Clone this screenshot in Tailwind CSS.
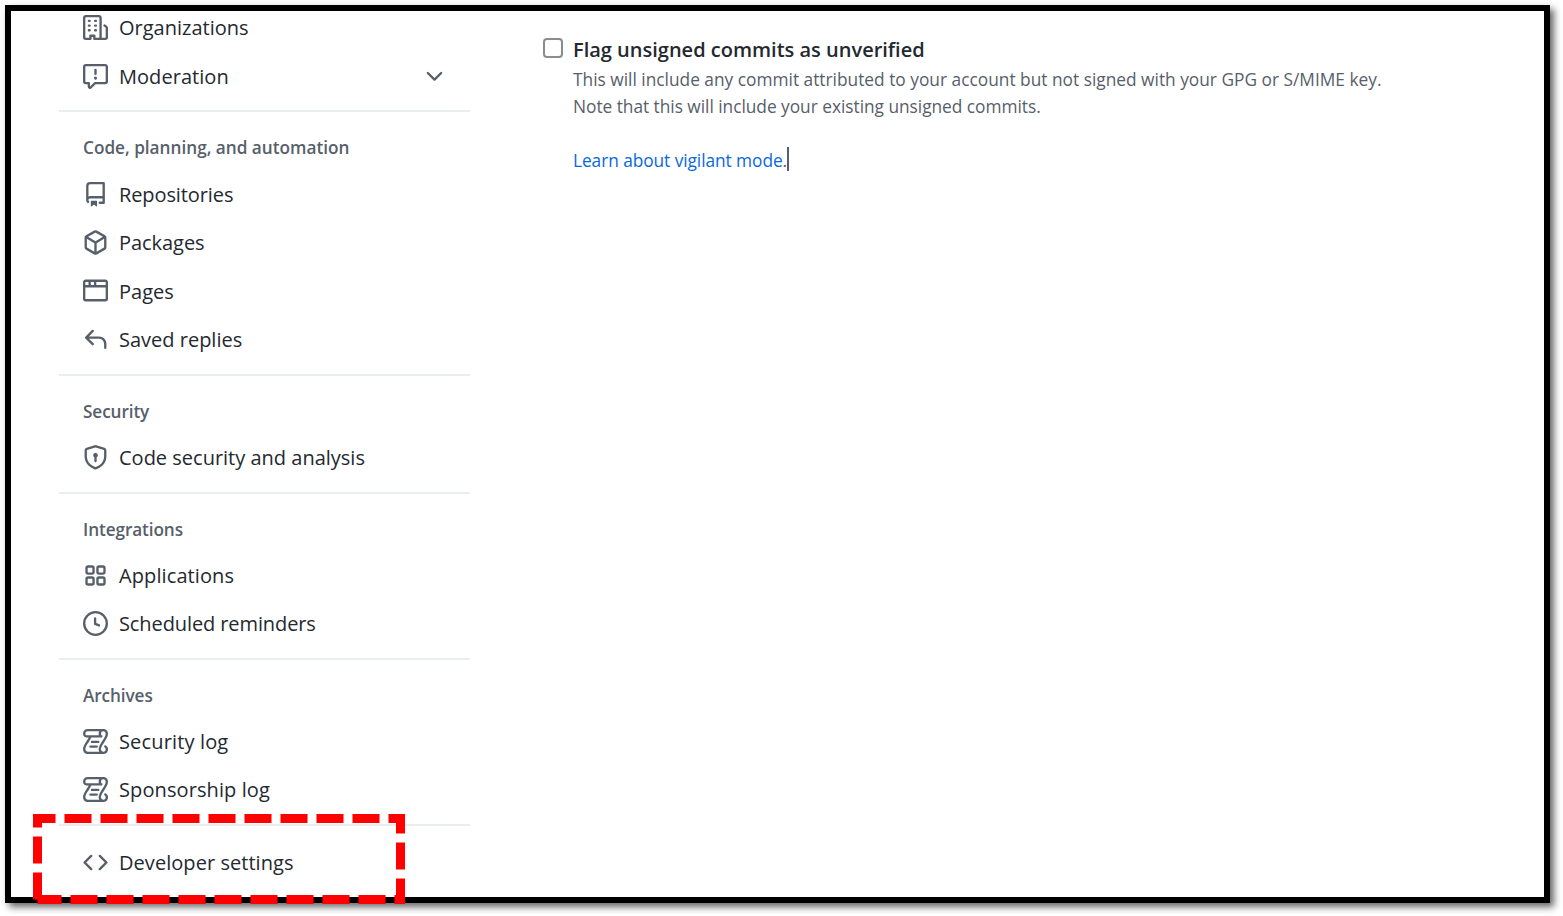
<!DOCTYPE html>
<html lang="en">

<head>
  <meta charset="UTF-8">
  <title>Account settings</title>
  <script src="https://cdn.jsdelivr.net/npm/@tailwindcss/browser@4"></script>
</head>

<body class="bg-white w-[1563px] h-[916px] overflow-hidden font-['Open_Sans','Noto_Sans',sans-serif] text-[#24292f]">
  <!-- icons -->
  <svg class="hidden">
    <symbol id="organization" viewBox="0 0 16 16"><path d="M1.75 16A1.75 1.75 0 0 1 0 14.25V1.75C0 .784.784 0 1.75 0h8.5C11.216 0 12 .784 12 1.75v12.5c0 .085-.006.168-.018.25h2.268a.25.25 0 0 0 .25-.25V8.285a.25.25 0 0 0-.111-.208l-1.055-.703a.749.749 0 1 1 .832-1.248l1.055.703c.487.325.779.871.779 1.456v5.965A1.75 1.75 0 0 1 14.25 16h-3.5a.766.766 0 0 1-.197-.026c-.099.017-.2.026-.303.026h-3a.75.75 0 0 1-.75-.75V14h-1v1.25a.75.75 0 0 1-.75.75Zm-.25-1.75c0 .138.112.25.25.25H4v-1.25a.75.75 0 0 1 .75-.75h2.5a.75.75 0 0 1 .75.75v1.25h2.25a.25.25 0 0 0 .25-.25V1.75a.25.25 0 0 0-.25-.25h-8.5a.25.25 0 0 0-.25.25ZM3.75 6h.5a.75.75 0 0 1 0 1.5h-.5a.75.75 0 0 1 0-1.5ZM3 3.75A.75.75 0 0 1 3.75 3h.5a.75.75 0 0 1 0 1.5h-.5A.75.75 0 0 1 3 3.75Zm4 3A.75.75 0 0 1 7.75 6h.5a.75.75 0 0 1 0 1.5h-.5A.75.75 0 0 1 7 6.75ZM7.75 3h.5a.75.75 0 0 1 0 1.5h-.5a.75.75 0 0 1 0-1.5ZM3 9.75A.75.75 0 0 1 3.75 9h.5a.75.75 0 0 1 0 1.5h-.5A.75.75 0 0 1 3 9.75ZM7.75 9h.5a.75.75 0 0 1 0 1.5h-.5a.75.75 0 0 1 0-1.5Z"/></symbol>
    <symbol id="report" viewBox="0 0 16 16"><path d="M0 1.75C0 .784.784 0 1.75 0h12.5C15.216 0 16 .784 16 1.75v9.5A1.75 1.75 0 0 1 14.25 13H8.06l-2.573 2.573A1.458 1.458 0 0 1 3 14.543V13H1.75A1.75 1.75 0 0 1 0 11.25Zm1.75-.25a.25.25 0 0 0-.25.25v9.5c0 .138.112.25.25.25h2a.75.75 0 0 1 .75.75v2.19l2.72-2.72a.749.749 0 0 1 .53-.22h6.5a.25.25 0 0 0 .25-.25v-9.5a.25.25 0 0 0-.25-.25Zm7 2.25v2.5a.75.75 0 0 1-1.5 0v-2.5a.75.75 0 0 1 1.5 0ZM9 9a1 1 0 1 1-2 0 1 1 0 0 1 2 0Z"/></symbol>
    <symbol id="chevron-down" viewBox="0 0 16 16"><path d="M12.78 5.22a.749.749 0 0 1 0 1.06l-4.25 4.25a.749.749 0 0 1-1.06 0L3.22 6.28a.749.749 0 1 1 1.06-1.06L8 8.939l3.72-3.719a.749.749 0 0 1 1.06 0Z"/></symbol>
    <symbol id="repo" viewBox="0 0 16 16"><path d="M2 2.5A2.5 2.5 0 0 1 4.5 0h8.75a.75.75 0 0 1 .75.75v12.5a.75.75 0 0 1-.75.75h-2.5a.75.75 0 0 1 0-1.5h1.75v-2h-8a1 1 0 0 0-.714 1.7.75.75 0 1 1-1.072 1.05A2.495 2.495 0 0 1 2 11.5Zm10.5-1h-8a1 1 0 0 0-1 1v6.708A2.486 2.486 0 0 1 4.5 9h8ZM5 12.25a.25.25 0 0 1 .25-.25h3.5a.25.25 0 0 1 .25.25v3.25a.25.25 0 0 1-.4.2l-1.45-1.087a.249.249 0 0 0-.3 0L5.4 15.7a.25.25 0 0 1-.4-.2Z"/></symbol>
    <symbol id="package" viewBox="0 0 16 16"><path d="m8.878.392 5.25 3.045c.54.314.872.89.872 1.514v6.098a1.75 1.75 0 0 1-.872 1.514l-5.25 3.045a1.75 1.75 0 0 1-1.756 0l-5.25-3.045A1.75 1.75 0 0 1 1 11.049V4.951c0-.624.332-1.201.872-1.514L7.122.392a1.75 1.75 0 0 1 1.756 0ZM7.875 1.69l-4.63 2.685L8 7.133l4.755-2.758-4.63-2.685a.248.248 0 0 0-.25 0ZM2.5 5.677v5.372c0 .09.047.171.125.216l4.625 2.683V8.432Zm6.25 8.271 4.625-2.683a.25.25 0 0 0 .125-.216V5.677L8.75 8.432Z"/></symbol>
    <symbol id="browser" viewBox="0 0 16 16"><path d="M0 2.75C0 1.784.784 1 1.75 1h12.5c.966 0 1.75.784 1.75 1.75v10.5A1.75 1.75 0 0 1 14.25 15H1.75A1.75 1.75 0 0 1 0 13.25ZM14.5 6h-13v7.25c0 .138.112.25.25.25h12.5a.25.25 0 0 0 .25-.25Zm-6-3.5v2h6V2.75a.25.25 0 0 0-.25-.25ZM5 2.5v2h2v-2Zm-3.25 0a.25.25 0 0 0-.25.25V4.5h2v-2Z"/></symbol>
    <symbol id="reply" viewBox="0 0 16 16"><path d="M6.78 1.97a.75.75 0 0 1 0 1.06L3.81 6h6.44A4.75 4.75 0 0 1 15 10.75v2.5a.75.75 0 0 1-1.5 0v-2.5a3.25 3.25 0 0 0-3.25-3.25H3.81l2.97 2.97a.749.749 0 0 1-.326 1.275.749.749 0 0 1-.734-.215L1.47 7.28a.75.75 0 0 1 0-1.06l4.25-4.25a.75.75 0 0 1 1.06 0Z"/></symbol>
    <symbol id="shield-lock" viewBox="0 0 16 16"><path d="m8.533.133 5.25 1.68A1.75 1.75 0 0 1 15 3.48V7c0 1.566-.32 3.182-1.303 4.682-.983 1.498-2.585 2.813-5.032 3.855a1.697 1.697 0 0 1-1.33 0c-2.447-1.042-4.049-2.357-5.032-3.855C1.32 10.182 1 8.566 1 7V3.48a1.75 1.75 0 0 1 1.217-1.667l5.25-1.68a1.748 1.748 0 0 1 1.066 0Zm-.61 1.429.001.001-5.25 1.68a.251.251 0 0 0-.174.237V7c0 1.36.275 2.666 1.057 3.859.784 1.194 2.121 2.342 4.366 3.298a.196.196 0 0 0 .154 0c2.245-.957 3.582-2.103 4.366-3.297C13.225 9.666 13.5 8.358 13.5 7V3.48a.25.25 0 0 0-.174-.238l-5.25-1.68a.25.25 0 0 0-.153 0ZM9.5 6.5c0 .536-.286 1.032-.75 1.3v2.45a.75.75 0 0 1-1.5 0V7.8A1.5 1.5 0 1 1 9.5 6.5Z"/></symbol>
    <symbol id="apps" viewBox="0 0 16 16"><g fill="none" stroke="currentColor" stroke-width="1.5"><rect x="2.25" y="2.25" width="4.5" height="4.5" rx="1"/><rect x="9.25" y="2.25" width="4.5" height="4.5" rx="1"/><rect x="2.25" y="9.25" width="4.5" height="4.5" rx="1"/><rect x="9.25" y="9.25" width="4.5" height="4.5" rx="1"/></g></symbol>
    <symbol id="clock" viewBox="0 0 16 16"><path d="M8 0a8 8 0 1 1 0 16A8 8 0 0 1 8 0ZM1.5 8a6.5 6.5 0 1 0 13 0 6.5 6.5 0 0 0-13 0Zm7-3.25v2.992l2.028.812a.75.75 0 0 1-.557 1.392l-2.5-1A.751.751 0 0 1 7 8.25v-3.5a.75.75 0 0 1 1.5 0Z"/></symbol>
    <symbol id="log" viewBox="0 0 16 16"><path d="M5.75 7.5h4a.75.75 0 0 1 0 1.5h-4a.75.75 0 0 1 0-1.5ZM4.75 10.5h4a.75.75 0 0 1 0 1.5h-4a.75.75 0 0 1 0-1.5Z"/><path d="M13 0c1.654 0 3 1.328 3 3 0 .982-.338 1.933-.783 2.818-.443.879-1.028 1.758-1.582 2.588l-.011.017c-.568.853-1.104 1.659-1.501 2.446-.398.789-.623 1.494-.623 2.136a1.5 1.5 0 1 0 2.333-1.248.75.75 0 0 1 .834-1.246A3 3 0 0 1 13 16H3a3 3 0 0 1-3-3c0-1.582.891-3.135 1.777-4.506.209-.322.418-.637.623-.946.473-.709.923-1.386 1.287-2.048H2.51c-.576 0-1.381-.133-1.907-.783A2.68 2.68 0 0 1 0 3a3 3 0 0 1 3-3Zm0 1.5A1.5 1.5 0 0 0 11.5 3c0 .476.223.834.667 1.132A.75.75 0 0 1 11.75 5.5H5.368c-.467 1.003-1.141 2.015-1.773 2.963-.192.289-.381.571-.558.845C2.13 10.711 1.5 11.916 1.5 13A1.5 1.5 0 0 0 3 14.5h7.401A2.989 2.989 0 0 1 10 13c0-.979.338-1.928.784-2.812.441-.874 1.023-1.748 1.575-2.576l.017-.026c.568-.853 1.103-1.658 1.501-2.448.398-.79.623-1.497.623-2.143 0-.838-.669-1.5-1.5-1.5Zm-10 0A1.5 1.5 0 0 0 1.5 3c0 .321.1.569.27.778.097.12.325.227.74.227h7.674A2.737 2.737 0 0 1 10 3c0-.546.146-1.059.401-1.5Z" fill-rule="evenodd"/></symbol>
    <symbol id="code" viewBox="0 0 16 16"><path d="m11.28 3.22 4.25 4.25a.75.75 0 0 1 0 1.06l-4.25 4.25a.749.749 0 0 1-1.275-.326.749.749 0 0 1 .215-.734L13.94 8l-3.72-3.72a.749.749 0 0 1 .326-1.275.749.749 0 0 1 .734.215Zm-6.56 0a.751.751 0 0 1 1.042.018.751.751 0 0 1 .018 1.042L2.06 8l3.72 3.72a.749.749 0 0 1-.326 1.275.749.749 0 0 1-.734-.215L.47 8.53a.75.75 0 0 1 0-1.06Z"/></symbol>
  </svg>

  <div class="relative w-full h-full p-[5px]">
    <div class="flex w-[1545px] h-[898px] border-6 border-black bg-white shadow-[4px_4px_7px_rgba(0,0,0,0.6)] overflow-hidden">

      <!-- sidebar -->
      <nav class="ml-12 -mt-[8px] h-[893px] w-[411px] shrink-0 text-[20px] whitespace-nowrap">
        <ul class="pb-[10.6px]">
          <li class="flex items-center h-[48.4px] pt-px pl-6 gap-[11px]"><svg class="size-[25px] fill-[#57606a]"><use href="#organization"/></svg><span class="pt-[1.5px]">Organizations</span></li>
          <li class="flex items-center h-[48.4px] pt-px pl-6 gap-[11px]"><svg class="size-[25px] fill-[#57606a]"><use href="#report"/></svg><span class="pt-[1.5px] tracking-[0.05px]">Moderation</span><svg class="size-[25px] fill-[#57606a] ml-auto mr-[23px] mt-[1.5px]"><use href="#chevron-down"/></svg></li>
        </ul>

        <div class="border-t-2 border-[#ebeef1] pt-3 pb-[10.6px]">
          <h3 class="flex items-center h-[45px] pl-6 text-[17.2px] font-semibold text-[#57606a]"><span class="pt-[3px]">Code, planning, and automation</span></h3>
          <ul>
            <li class="flex items-center h-[48.4px] pt-px pl-6 gap-[11px]"><svg class="size-[25px] fill-[#57606a]"><use href="#repo"/></svg><span class="pt-[1.5px] -tracking-[0.1px]">Repositories</span></li>
            <li class="flex items-center h-[48.4px] pt-px pl-6 gap-[11px]"><svg class="size-[25px] fill-[#57606a]"><use href="#package"/></svg><span class="pt-[1.5px] -tracking-[0.05px]">Packages</span></li>
            <li class="flex items-center h-[48.4px] pt-px pl-6 gap-[11px]"><svg class="size-[25px] fill-[#57606a]"><use href="#browser"/></svg><span class="pt-[1.5px]">Pages</span></li>
            <li class="flex items-center h-[48.4px] pt-px pl-6 gap-[11px]"><svg class="size-[25px] fill-[#57606a]"><use href="#reply"/></svg><span class="pt-[1.5px]">Saved replies</span></li>
          </ul>
        </div>

        <div class="border-t-2 border-[#ebeef1] pt-3 pb-[10.6px]">
          <h3 class="flex items-center h-[45px] pl-6 text-[17.2px] font-semibold text-[#57606a]"><span class="pt-[3px] -tracking-[0.1px]">Security</span></h3>
          <ul>
            <li class="flex items-center h-[48.4px] pt-px pl-6 gap-[11px]"><svg class="size-[25px] fill-[#57606a]"><use href="#shield-lock"/></svg><span class="pt-[1.5px]">Code security and analysis</span></li>
          </ul>
        </div>

        <div class="border-t-2 border-[#ebeef1] pt-3 pb-[10.6px]">
          <h3 class="flex items-center h-[45px] pl-6 text-[17.2px] font-semibold text-[#57606a]"><span class="pt-[3px] -tracking-[0.1px]">Integrations</span></h3>
          <ul>
            <li class="flex items-center h-[48.4px] pt-px pl-6 gap-[11px]"><svg class="size-[25px] text-[#57606a]"><use href="#apps"/></svg><span class="pt-[1.5px] tracking-[0.1px]">Applications</span></li>
            <li class="flex items-center h-[48.4px] pl-6 gap-[11px]"><svg class="size-[25px] fill-[#57606a]"><use href="#clock"/></svg><span class="pt-[1.5px] -tracking-[0.1px]">Scheduled reminders</span></li>
          </ul>
        </div>

        <div class="border-t-2 border-[#ebeef1] pt-3 pb-[10.6px]">
          <h3 class="flex items-center h-[45px] pl-6 text-[17.2px] font-semibold text-[#57606a]"><span class="pt-[3px] -tracking-[0.1px]">Archives</span></h3>
          <ul>
            <li class="flex items-center h-[48.4px] pl-6 gap-[11px]"><svg class="size-[25px] fill-[#57606a]"><use href="#log"/></svg><span class="pt-[1.5px] tracking-[0.15px]">Security log</span></li>
            <li class="flex items-center h-[48.4px] pl-6 gap-[11px]"><svg class="size-[25px] fill-[#57606a]"><use href="#log"/></svg><span class="pt-[1.5px] tracking-[0.1px]">Sponsorship log</span></li>
          </ul>
        </div>

        <ul class="border-t-2 border-[#ebeef1] pt-3">
          <li class="flex items-center h-[48.4px] pl-6 gap-[11px]"><svg class="size-[25px] fill-[#57606a]"><use href="#code"/></svg><span class="pt-[1px] tracking-[0.05px]">Developer settings</span></li>
        </ul>
      </nav>

      <!-- vigilant mode -->
      <main class="flex items-start gap-[10px] ml-[73px] pt-6 whitespace-nowrap">
        <input type="checkbox" class="appearance-none mt-[3px] size-5 rounded-[4px] border-2 border-[#8b8b8b] bg-white">
        <div class="text-[17.32px] leading-[27px] text-[#57606a]">
          <label class="block h-[31px] leading-[28px] pt-px text-[20px] font-semibold text-[#24292f]">Flag unsigned commits as unverified</label>
          <p>This will include any commit attributed to your account but not signed with your GPG or S/MIME key.</p>
          <p class="-tracking-[0.03px]">Note that this will include your existing unsigned commits.</p>
          <p class="flex items-center mt-[27px]"><a class="text-[#0969da] -tracking-[0.07px]">Learn about vigilant mode<span class="text-[#57606a]">.</span></a><span class="w-[2px] h-6 -mt-[3px] bg-[#57606a]"></span></p>
        </div>
      </main>
    </div>

    <!-- highlight box -->
    <svg class="absolute left-0 top-0" width="1563" height="916">
      <path d="M37.5 899.5V818.5H400.5V899.5H37.5" fill="none" stroke="#ff0000" stroke-width="9" stroke-dasharray="27 9"/>
    </svg>
  </div>
</body>

</html>
